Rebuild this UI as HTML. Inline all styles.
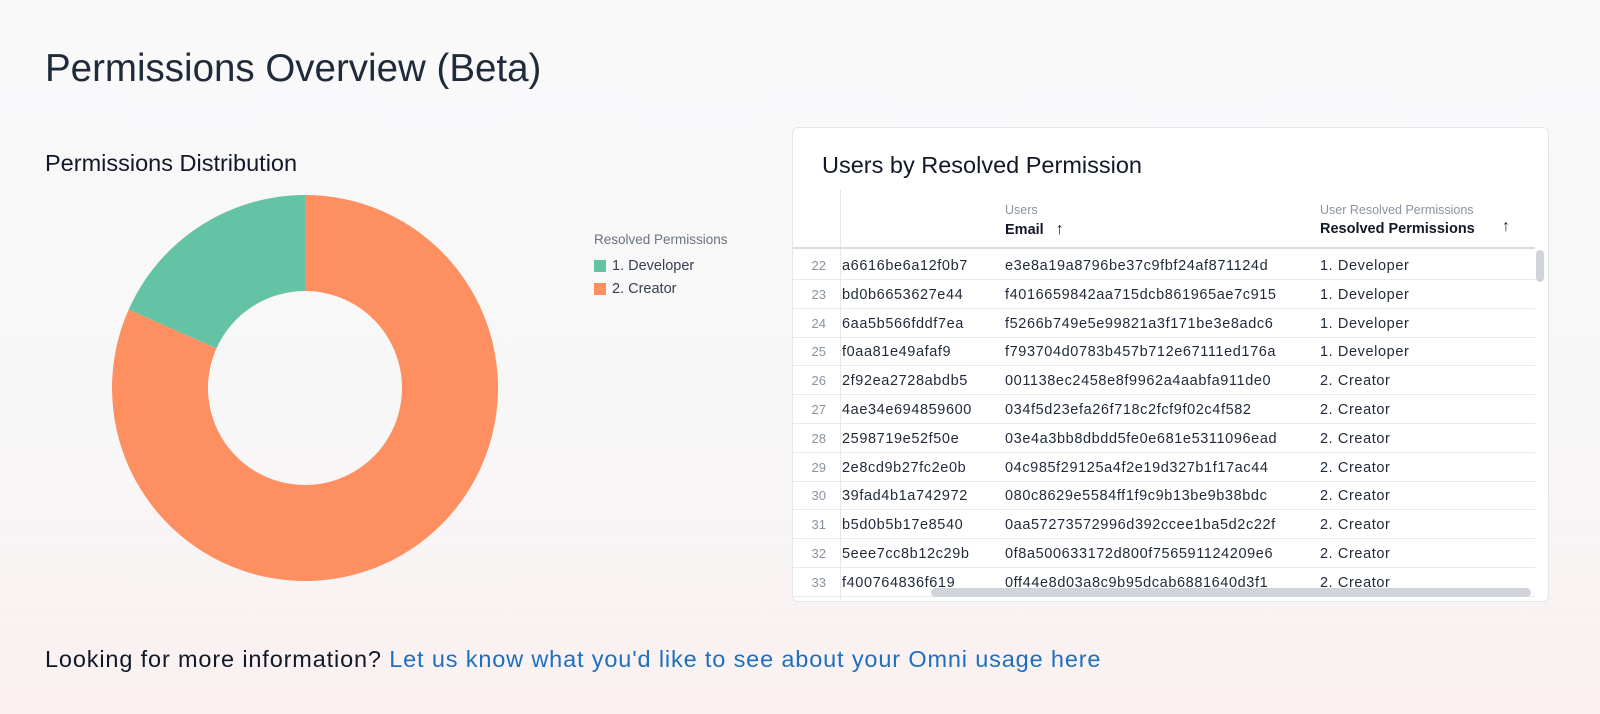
<!DOCTYPE html>
<html><head><style>
body{margin:0;width:1600px;height:714px;overflow:hidden;font-family:"Liberation Sans",sans-serif;background:linear-gradient(180deg,#f9f9fa 0%,#f8f7f8 60%,#faf0f0 100%);position:relative;color:#1f2937}
.a{position:absolute;white-space:nowrap}
.card{position:absolute;left:792px;top:127px;width:755px;height:473px;background:#fff;border:1px solid #e5e7eb;border-radius:6px;overflow:hidden}
.row{position:absolute;left:0;width:742px;height:28px;border-bottom:1px solid #e8eaee;font-size:14.5px;color:#1f2937;letter-spacing:0.6px}
.row span{position:absolute;top:7px}
.n{left:0;width:33px;text-align:right;color:#8a93a0;font-size:13px;letter-spacing:0}
.c1{left:49px;width:160px;overflow:hidden;direction:rtl;text-align:left}
</style></head><body>
<div class="a" style="left:45px;top:47px;font-size:38.5px;color:#1f2a3a">Permissions Overview (Beta)</div>
<div class="a" style="left:45px;top:150px;font-size:23.5px;color:#111827">Permissions Distribution</div>
<svg class="a" style="left:0;top:0" width="780" height="600">
<path d="M305 195 A193 193 0 1 1 128.7 309.5 L216.4 348.5 A97 97 0 1 0 305 291 Z" fill="#fd8f61"/>
<path d="M305 195 L305 291 A97 97 0 0 0 216.4 348.5 L128.7 309.5 A193 193 0 0 1 305 195 Z" fill="#64c3a4"/>
<rect x="594" y="260" width="12" height="12" fill="#64c3a4"/>
<rect x="594" y="283" width="12" height="12" fill="#fd8f61"/>
</svg>
<div class="a" style="left:594px;top:232px;font-size:13.5px;color:#6b7280">Resolved Permissions</div>
<div class="a" style="left:612px;top:258px;font-size:14.5px;color:#374151">1. Developer</div>
<div class="a" style="left:612px;top:281px;font-size:14.5px;color:#374151">2. Creator</div>
<div class="card">
<div class="a" style="left:29px;top:24px;font-size:23.5px;color:#111827">Users by Resolved Permission</div>
<div class="a" style="left:47px;top:62px;width:1px;height:410px;background:#e5e7eb"></div>
<div class="a" style="left:212px;top:75px;font-size:12.5px;color:#8a93a0">Users</div>
<div class="a" style="left:212px;top:93px;font-size:14.5px;font-weight:bold;color:#111827">Email&nbsp;&nbsp;&nbsp;<span style="font-weight:normal;font-size:16px">↑</span></div>
<div class="a" style="left:527px;top:75px;font-size:12.5px;color:#8a93a0">User Resolved Permissions</div>
<div class="a" style="left:527px;top:93px;font-size:14.5px;font-weight:bold;color:#111827">Resolved Permissions</div>
<div class="a" style="left:709px;top:90px;font-size:16px">↑</div>
<div class="a" style="left:0;top:119px;width:742px;height:2px;background:#d9dde3"></div>
<div id="rows"></div>
<div class="a" style="left:743px;top:122px;width:8px;height:32px;border-radius:4px;background:#d1d5db"></div>
<div class="a" style="left:138px;top:460px;width:600px;height:9px;border-radius:5px;background:#d1d5db"></div>
</div>
<div class="a" style="left:45px;top:646px;font-size:23.5px;letter-spacing:0.85px;color:#111827">Looking for more information? <span style="color:#1d6fc0">Let us know what you'd like to see about your Omni usage here</span></div>
<script>
var d=[["22","a6616be6a12f0b7","e3e8a19a8796be37c9fbf24af871124d","1. Developer"],["23","bd0b6653627e44","f4016659842aa715dcb861965ae7c915","1. Developer"],["24","6aa5b566fddf7ea","f5266b749e5e99821a3f171be3e8adc6","1. Developer"],["25","f0aa81e49afaf9","f793704d0783b457b712e67111ed176a","1. Developer"],["26","2f92ea2728abdb5","001138ec2458e8f9962a4aabfa911de0","2. Creator"],["27","4ae34e694859600","034f5d23efa26f718c2fcf9f02c4f582","2. Creator"],["28","2598719e52f50e","03e4a3bb8dbdd5fe0e681e5311096ead","2. Creator"],["29","2e8cd9b27fc2e0b","04c985f29125a4f2e19d327b1f17ac44","2. Creator"],["30","39fad4b1a742972","080c8629e5584ff1f9c9b13be9b38bdc","2. Creator"],["31","b5d0b5b17e8540","0aa57273572996d392ccee1ba5d2c22f","2. Creator"],["32","5eee7cc8b12c29b","0f8a500633172d800f756591124209e6","2. Creator"],["33","f400764836f619","0ff44e8d03a8c9b95dcab6881640d3f1","2. Creator"]];
var h="";d.forEach(function(r,i){h+='<div class="row" style="top:'+(123+i*28.8)+'px"><span class="n">'+r[0]+'</span><span class="c1"><bdi>'+r[1]+'</bdi></span><span style="left:212px">'+r[2]+'</span><span style="left:527px">'+r[3]+'</span></div>'});
document.getElementById("rows").innerHTML=h;
</script>
</body></html>
